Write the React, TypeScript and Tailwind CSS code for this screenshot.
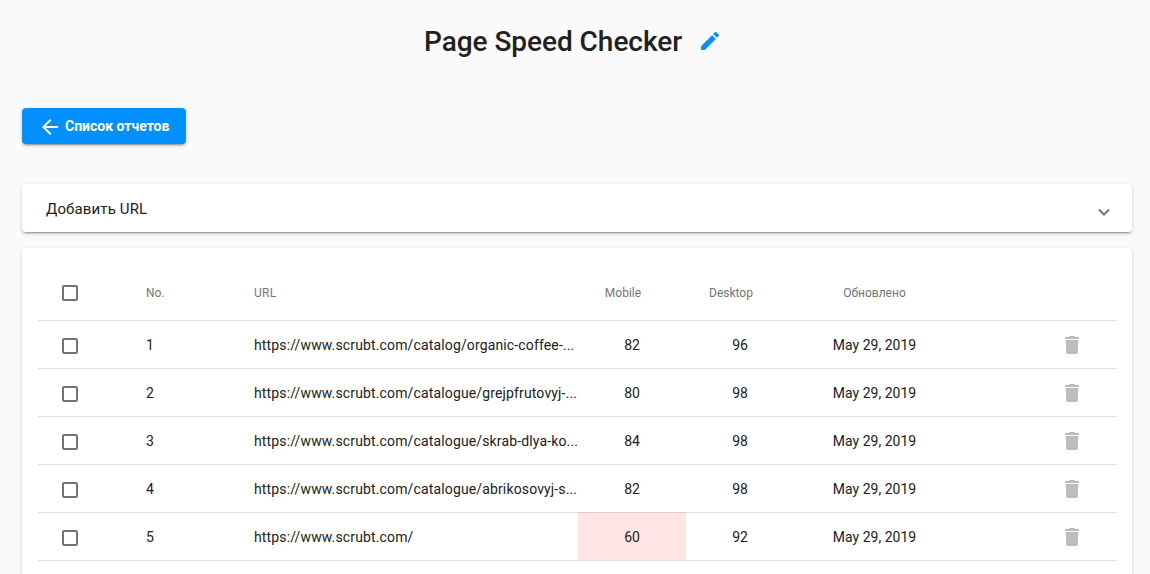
import React from "react";

const rows = [
  { url: "https://www.scrubt.com/catalog/organic-coffee-...", mobile: 82, desktop: 96 },
  { url: "https://www.scrubt.com/catalogue/grejpfrutovyj-...", mobile: 80, desktop: 98 },
  { url: "https://www.scrubt.com/catalogue/skrab-dlya-ko...", mobile: 84, desktop: 98 },
  { url: "https://www.scrubt.com/catalogue/abrikosovyj-s...", mobile: 82, desktop: 98 },
  { url: "https://www.scrubt.com/", mobile: 60, desktop: 92 },
];

const columns = "grid grid-cols-[108px_108px_324px_108px_108px_161px_161px]";

function Icon({ d, className }: { d: string; className: string }) {
  return (
    <svg viewBox="0 0 24 24" fill="currentColor" className={className}>
      <path d={d} />
    </svg>
  );
}

function Checkbox() {
  return (
    <span
      role="checkbox"
      aria-checked="false"
      className="ml-6 block size-4 rounded-[2px] border-2 border-[#737373]"
    />
  );
}

export default function App() {
  return (
    <div
      className="h-[574px] overflow-hidden bg-[#fafafa] text-[#212121]"
      style={{ fontFamily: 'Roboto, "Liberation Sans", sans-serif' }}
    >
      <header className="flex h-[84px] items-center justify-center pr-[4px]">
        <h1 className="w-[258px] text-[28px] leading-8 font-medium tracking-[-0.04px] whitespace-nowrap">Page Speed Checker</h1>
        <Icon
          className="mb-0.5 ml-4 size-6 text-[#0290ff]"
          d="M3 17.25V21h3.75L17.81 9.94l-3.75-3.75L3 17.25zM20.71 7.04a.996.996 0 0 0 0-1.41l-2.34-2.34a.996.996 0 0 0-1.41 0l-1.83 1.83 3.75 3.75 1.83-1.83z"
        />
      </header>

      <main className="flex flex-col pt-6 pr-[18px] pl-[22px]">
        <button className="flex h-9 w-[164px] items-center rounded bg-[#0290ff] pl-4 text-[14px] font-bold whitespace-nowrap text-white shadow-[0_3px_1px_-2px_rgba(0,0,0,0.2),0_2px_2px_0_rgba(0,0,0,0.14),0_1px_5px_0_rgba(0,0,0,0.12)]">
          <Icon
            className="mt-0.5 mr-[3px] size-6"
            d="M20 11H7.8l5.6-5.6L12 4l-8 8 8 8 1.4-1.4L7.8 13H20z"
          />
          Список отчетов
        </button>

        <section className="mt-10 flex h-12 items-center justify-between rounded bg-white pr-[22px] pl-6 text-[15px] tracking-[0.13px] shadow-[0_3px_1px_-2px_rgba(0,0,0,0.2),0_2px_2px_0_rgba(0,0,0,0.14),0_1px_5px_0_rgba(0,0,0,0.12)]">
          <span className="pt-0.5">Добавить URL</span>
          <svg viewBox="0 0 12 8" className="mt-[7px] h-2 w-3 fill-none stroke-[#757575] stroke-2">
            <path d="M1 1.5 6 6.5 11 1.5" />
          </svg>
        </section>

        <section className="mt-4 h-[400px] rounded bg-white px-4 pt-4 shadow-[0_3px_1px_-2px_rgba(0,0,0,0.2),0_2px_2px_0_rgba(0,0,0,0.14),0_1px_5px_0_rgba(0,0,0,0.12)]">
          <div className={`${columns} h-[57px] items-center border-b border-[#e0e0e0] pt-0.5 text-[12px] text-[#757575]`}>
            <Checkbox />
            <span>No.</span>
            <span className="tracking-[0.3px]">URL</span>
            <span className="pr-[18px] text-center">Mobile</span>
            <span className="pr-[18px] text-center">Desktop</span>
            <span className="text-center">Обновлено</span>
          </div>
          {rows.map((row, index) => (
            <div key={row.url} className={`${columns} h-12 items-center border-b border-[#e0e0e0] pt-0.5 text-[14px]`}>
              <Checkbox />
              <span>{index + 1}</span>
              <span className="tracking-[0.14px] whitespace-nowrap">{row.url}</span>
              <span
                className={
                  row.mobile < 70
                    ? "-mt-[3px] flex h-12 items-center justify-center bg-[#ff1a0a1c] pt-0.5"
                    : "text-center"
                }
              >
                {row.mobile}
              </span>
              <span className="text-center">{row.desktop}</span>
              <span className="text-center">May 29, 2019</span>
              <span className="-mt-0.5 flex justify-end pr-8">
                <Icon
                  className="size-6 text-[#bdbdbd]"
                  d="M6 19c0 1.1.9 2 2 2h8c1.1 0 2-.9 2-2V7H6v12zM19 4h-3.5l-1-1h-5l-1 1H5v2h14V4z"
                />
              </span>
            </div>
          ))}
        </section>
      </main>
    </div>
  );
}
